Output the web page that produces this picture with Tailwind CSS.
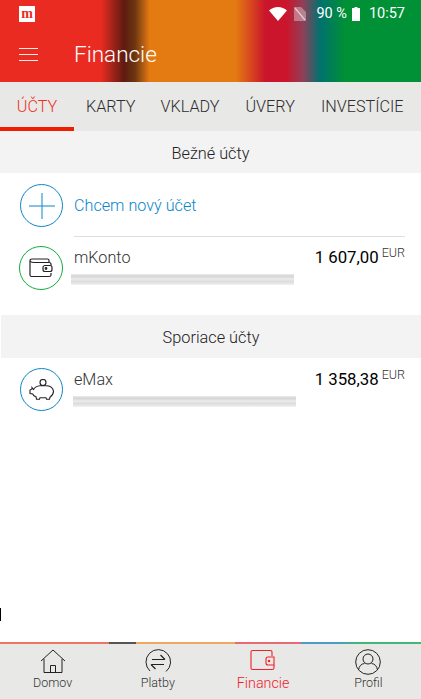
<!DOCTYPE html>
<html lang="sk">
<head>
  <meta charset="UTF-8" />
  <meta name="viewport" content="width=device-width, initial-scale=1.0" />
  <title>Financie</title>
  <script src="https://cdn.jsdelivr.net/npm/@tailwindcss/browser@4"></script>
</head>
<body class="bg-white font-['Roboto',sans-serif]">
  <div class="relative w-[421px] h-[699px] overflow-hidden flex flex-col bg-white">

    <!-- header -->
    <header class="h-[82px] shrink-0 text-white bg-[linear-gradient(90deg,#e92b22_0%,#e92b22_24%,#5e1b10_29.5%,#6b3510_32%,#e37a12_35.5%,#e37a12_56%,#cb152c_63%,#cb152c_68%,#8f4058_72%,#00716f_76%,#009035_82%,#009035_100%)]">
      <div class="h-[27px] flex items-center pl-[19px] pr-[16px]">
        <div class="w-4 h-4 bg-white flex items-center justify-center text-[#e92b22] text-[14px] leading-none font-bold font-['Liberation_Serif',serif]">m</div>
        <div class="ml-auto flex items-center">
          <svg width="18" height="14" viewBox="0 0 18 14" class="mr-[7px]"><path d="M0 3.500C2.500 1.200 5.600 0 9 0s6.500 1.200 9 3.500L9 14z" fill="#fff"/></svg>
          <svg width="12" height="14" viewBox="0 0 12 14" class="mr-[10px]"><path d="M0 0h7l5 5v9H0z" fill="#fff" fill-opacity=".35"/><path d="M1 1l10 12" stroke="#fff" stroke-opacity=".6" stroke-width="1.200"/></svg>
          <span class="text-[14.500px] mr-[5px]">90 %</span>
          <svg width="8" height="14" viewBox="0 0 8 14" class="mr-[9px]"><path d="M2.500 0h3v1H8v13H0V1h2.500z" fill="#fff"/></svg>
          <span class="text-[14.500px]">10:57</span>
        </div>
      </div>
      <div class="h-[55px] flex items-center pl-[19px]">
        <div class="w-[19px] flex flex-col gap-[5px]">
          <div class="h-px bg-white/90"></div>
          <div class="h-px bg-white/90"></div>
          <div class="h-px bg-white/90"></div>
        </div>
        <h1 class="ml-[36px] text-[22.500px] font-light">Financie</h1>
      </div>
    </header>

    <!-- tabs -->
    <nav class="h-[49px] shrink-0 bg-[#e8e8e6] flex text-[16.200px] font-[350] text-[#2e2e2e]">
      <div class="w-[74px] flex items-center justify-center text-[#ee3124] border-b-4 border-[#f01e00] pt-[5px]">ÚČTY</div>
      <div class="flex items-center pl-[12px] pt-px">KARTY</div>
      <div class="flex items-center pl-[25px] pt-px">VKLADY</div>
      <div class="flex items-center pl-[26px] pt-px">ÚVERY</div>
      <div class="flex items-center pl-[26px] pt-px">INVESTÍCIE</div>
    </nav>

    <!-- bezne ucty -->
    <div class="h-[42px] shrink-0 bg-[#f3f3f3] flex items-center justify-center text-[16.300px] font-[350] text-[#222] pt-[4px]">Bežné účty</div>

    <div class="pl-[19px] pr-4">
      <div class="flex h-[64px] items-start">
        <div class="w-[43px] h-[43px] ml-px mt-[11px] shrink-0 rounded-full border border-[#0b86c9] flex items-center justify-center">
          <svg width="26" height="26" viewBox="0 0 26 26"><path d="M13 0v26M0 13h26" stroke="#0b86c9" stroke-width="1"/></svg>
        </div>
        <div class="ml-[11px] flex-1 h-full border-b border-[#dedede] flex items-center pt-[3px]">
          <span class="text-[16.200px] font-[350] text-[#0b86c9]">Chcem nový účet</span>
        </div>
      </div>

      <div class="flex h-[78px] items-start">
        <div class="w-[44px] h-[44px] mt-[9px] shrink-0 rounded-full border border-[#12ad3e] flex items-center justify-center">
          <svg width="24" height="20" viewBox="0 0 24 20" fill="none" stroke="#222" stroke-width="1.200"><path d="M20 4V2.500Q20 1 18.500 1H3Q1 1 1 3v14q0 1.500 1.500 1.500H20q2 0 2-1.500v-2"/><path d="M1 3.500Q3 4.500 5 4.500H20q2 0 2 1.500v1.500"/><rect x="14" y="7.500" width="9" height="6" rx="2"/><circle cx="17" cy="10.500" r=".8"/></svg>
        </div>
        <div class="ml-[11px] flex-1 min-w-0">
          <div class="flex items-start justify-between h-[37px]">
            <span class="text-[16.200px] text-[#333] mt-[9px] font-[350]">mKonto</span>
            <span class="mt-[8px] flex items-start text-black">
              <span class="text-[16.800px] font-[370]">1 607,00</span>
              <span class="ml-[3px] text-[12.500px] text-[#333] font-[350] leading-none mt-[2px]">EUR</span>
            </span>
          </div>
          <div class="ml-[-3px] w-[223px] h-[11px] blur-[0.4px] bg-[linear-gradient(180deg,#ececec_0%,#d4d4d4_20%,#ebebeb_45%,#dcdcdc_70%,#f2f2f2_100%)]"></div>
        </div>
      </div>
    </div>

    <!-- sporiace ucty -->
    <div class="h-[43px] shrink-0 ml-px bg-[#f3f3f3] flex items-center justify-center text-[16.300px] font-[350] text-[#222] pt-[4px]">Sporiace účty</div>

    <div class="flex pl-[20px] pr-4 items-start">
      <div class="w-[43px] h-[43px] mt-[10px] shrink-0 rounded-full border border-[#0b86c9] flex items-center justify-center">
        <svg width="26" height="22" viewBox="0 0 26 22" fill="none" stroke="#222" stroke-width="1.100"><circle cx="14" cy="3.500" r="3"/><path d="M3 8.500l1.500 2Q6.500 7 11 6.700h6q6.500 0 7.500 5.500 0 3.500-3.500 6l-.500 2h-3l-.500-1.500h-6l-.500 1.500h-3l-.500-2.500Q4.500 17 3.700 15L1 14.500v-3.500l2-1z"/></svg>
      </div>
      <div class="ml-[11px] flex-1 min-w-0">
        <div class="flex items-start justify-between h-[38px]">
          <span class="text-[16.200px] text-[#333] mt-[10px] font-[350]">eMax</span>
          <span class="mt-[9px] flex items-start text-black">
            <span class="text-[16.800px] font-[370]">1 358,38</span>
            <span class="ml-[3px] text-[12.500px] text-[#333] font-[350] leading-none mt-[2px]">EUR</span>
          </span>
        </div>
        <div class="ml-[-1px] w-[223px] h-[11px] blur-[0.4px] bg-[linear-gradient(180deg,#ececec_0%,#d4d4d4_20%,#ebebeb_45%,#dcdcdc_70%,#f2f2f2_100%)]"></div>
      </div>
    </div>

    <!-- stray tick on the left edge -->
    <div class="absolute left-0 top-[608px] w-px h-[13px] bg-black"></div>

    <!-- bottom nav -->
    <footer class="mt-auto h-[57px] shrink-0 bg-[#e8e8e6] border-t-2 border-t-transparent relative grid grid-cols-4 text-[12.500px] text-[#333]">
      <div class="absolute left-0 right-0 top-[-2px] h-[2px] bg-[linear-gradient(90deg,#ee7468_0%,#ee7468_25.800%,#555_25.800%,#555_32.400%,#f0a860_32.400%,#f0a860_55.800%,#e86a72_55.800%,#e86a72_71.500%,#4e9ac8_71.500%,#4e9ac8_80%,#40b878_85%,#40b878_100%)]"></div>
      <div class="flex flex-col items-center pt-[5px]">
        <svg width="26" height="26" viewBox="0 0 26 26" fill="none" stroke="#222" stroke-width="1"><path d="M1 12L13 1l12 11"/><path d="M4 10v13.500h18V10"/><path d="M10.500 23.500v-7h5v7"/></svg>
        <span class="mt-[-1px] font-[350]">Domov</span>
      </div>
      <div class="flex flex-col items-center pt-[5px]">
        <svg width="26" height="26" viewBox="0 0 26 26" fill="none" stroke="#222" stroke-width="1"><path d="M5 22A12.300 12.300 0 1 1 21 22.500"/><path d="M7 10.500h12.500M15.500 6l4.500 4.500M19 15.500H6.500M10.500 20L6 15.500" stroke-width="1.200"/></svg>
        <span class="mt-[-1px] font-[350]">Platby</span>
      </div>
      <div class="flex flex-col items-center pt-[5px] text-[#f2202a] text-[14.300px]">
        <svg width="26" height="26" viewBox="0 0 26 26" fill="none" stroke="#f2202a" stroke-width="1.100"><path d="M22 7V3Q22 1.500 20.500 1.500H2.500Q1 1.500 1 3v16q0 1.500 1.500 1.500H22q2 0 2-1.500v-3"/><path d="M24 16h-6q-2 0-2-2v-4q0-2 2-2h6z"/><circle cx="19" cy="12" r=".7"/></svg>
        <span class="mt-[-2px] font-[350]">Financie</span>
      </div>
      <div class="flex flex-col items-center pt-[5px]">
        <svg width="26" height="26" viewBox="0 0 26 26" fill="none" stroke="#222" stroke-width="1"><circle cx="13" cy="13" r="12.300"/><circle cx="13" cy="10" r="5"/><path d="M3.500 21q1-6 6-6.500M22.500 21q-1-6-6-6.500"/></svg>
        <span class="mt-[-1px] font-[350]">Profil</span>
      </div>
    </footer>
  </div>
</body>
</html>
